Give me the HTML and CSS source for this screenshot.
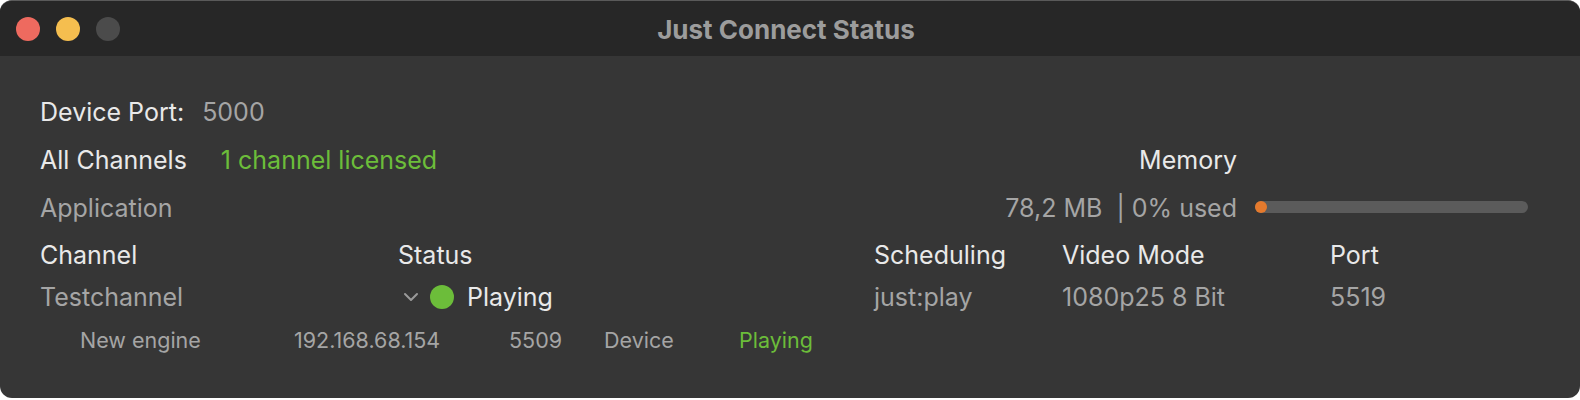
FILE: index.html
```html
<!DOCTYPE html>
<html>
<head>
<meta charset="utf-8">
<link rel="stylesheet" href="styles.css">
</head>
<body>
<div class="window">
  <div class="titlebar">
    <div class="lights">
      <span class="light red"></span>
      <span class="light yellow"></span>
      <span class="light grey"></span>
    </div>
    <div class="title">Just Connect Status</div>
  </div>
  <div class="content">
    <div class="row">
      <span class="label">Device Port:</span>
      <span class="value port-val">5000</span>
    </div>
    <div class="summary">
      <div class="cell"><span class="label">All Channels</span><span class="green licensed">1 channel licensed</span></div>
      <div class="cell mem-label label">Memory</div>
      <div class="cell"></div>
      <div class="cell value">Application</div>
      <div class="cell mem-text value">78,2 MB&nbsp;&nbsp;| 0% used</div>
      <div class="cell"><div class="bar"><div class="bar-fill" style="width:0%"></div></div></div>
    </div>
    <div class="table">
      <div class="th">Channel</div>
      <div class="th">Status</div>
      <div class="th">Scheduling</div>
      <div class="th">Video Mode</div>
      <div class="th">Port</div>
      <div class="td value">Testchannel</div>
      <div class="td status">
        <svg class="chevron" width="16" height="10" viewBox="0 0 16 10"><path d="M2 2 L8 8 L14 2" fill="none" stroke="#9a9a9a" stroke-width="2" stroke-linecap="round" stroke-linejoin="round"/></svg>
        <span class="dot"></span>
        <span class="label">Playing</span>
      </div>
      <div class="td value">just:play</div>
      <div class="td value">1080p25 8 Bit</div>
      <div class="td value">5519</div>
    </div>
    <div class="engine">
      <span class="e1">New engine</span>
      <span class="e2">192.168.68.154</span>
      <span class="e3">5509</span>
      <span class="e4">Device</span>
      <span class="e5 green">Playing</span>
    </div>
  </div>
</div>
</body>
</html>
```

FILE: styles.css
```css
html, body {
  margin: 0;
  padding: 0;
  background: #ffffff;
}
body {
  font-family: Inter, "Noto Sans", "Liberation Sans", sans-serif;
  -webkit-font-smoothing: antialiased;
}
.window {
  width: 1580px;
  height: 398px;
  box-sizing: border-box;
  background: #363636;
  border-radius: 12px;
  overflow: hidden;
  border-top: 1px solid #5a5a5a;
}
.titlebar {
  height: 55px;
  background: #272727;
  display: flex;
  align-items: center;
  position: relative;
}
.lights {
  display: flex;
  gap: 16px;
  padding-left: 16px;
  margin-top: 1px;
}
.light {
  width: 24px;
  height: 24px;
  border-radius: 50%;
  display: block;
}
.red { background: #ee6a5f; }
.yellow { background: #f5be4f; }
.grey { background: #4b4b4b; }
.title {
  position: absolute;
  left: 0;
  right: 0;
  top: 0;
  bottom: 0;
  display: flex;
  align-items: center;
  justify-content: center;
  font-weight: 700;
  font-size: 26px;
  color: #9c9c9c;
  padding-top: 1px;
  padding-right: 8px;
}
.content {
  padding: 32px 52px 0 40px;
  font-size: 25px;
}
.label { color: #e9e9e9; }
.value { color: #a5a5a5; }
.green { color: #6cbd3a; }
.row {
  height: 48px;
  display: flex;
  align-items: center;
}
.port-val { margin-left: 18px; }
.summary {
  display: grid;
  grid-template-columns: 1fr auto 273px;
  grid-auto-rows: 48px;
  column-gap: 18px;
}
.cell {
  display: flex;
  align-items: center;
}
.licensed { margin-left: 34px; }
.mem-label, .mem-text { justify-content: flex-end; }
.bar {
  width: 273px;
  height: 12px;
  border-radius: 6px;
  background: #5b5b5b;
  position: relative;
  margin-top: -2px;
}
.bar-fill {
  position: absolute;
  left: 0;
  top: 0;
  height: 12px;
  min-width: 12px;
  border-radius: 6px;
  background: #e57a2d;
}
.table {
  display: grid;
  grid-template-columns: 358px 476px 188px 268px 1fr;
  grid-template-rows: 46px 38px;
  margin-top: 0;
}
.th, .td {
  display: flex;
  align-items: center;
}
.th { color: #e9e9e9; }
.chevron { margin-left: 5px; margin-right: 11px; }
.dot {
  width: 24px;
  height: 24px;
  border-radius: 50%;
  background: #6cbd3a;
  display: block;
  margin-right: 13px;
}
.engine {
  height: 48px;
  display: flex;
  align-items: center;
  font-size: 21.5px;
  color: #a5a5a5;
  padding-left: 40px;
}
.engine span { display: block; }
.e1 { width: 214px; }
.e2 { width: 215px; }
.e3 { width: 95px; }
.e4 { width: 135px; }
.e5 { color: #6cbd3a; }
```
